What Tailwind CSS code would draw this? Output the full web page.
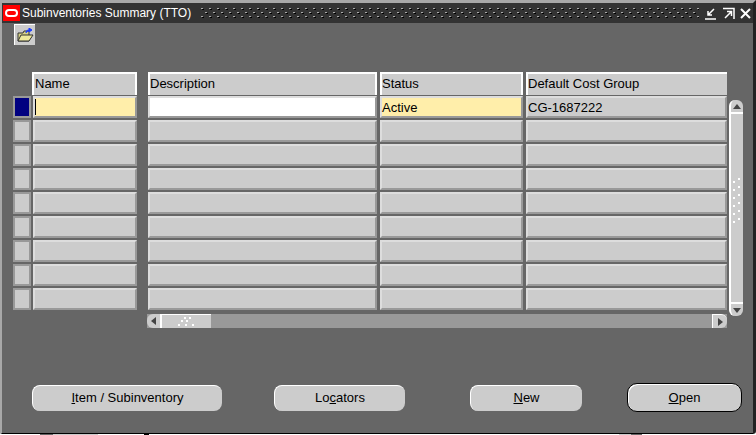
<!DOCTYPE html>
<html>
<head>
  <meta charset="UTF-8">
  <title>Subinventories Summary (TTO)</title>
  <script src="https://cdn.jsdelivr.net/npm/@tailwindcss/browser@4"></script>
</head>
<body class="bg-white">
  <div class="w-[756px] h-[434px] overflow-hidden flex flex-col bg-[#666666] text-black text-[13px] leading-[14px] font-['Liberation_Sans',sans-serif] border-t-[3px] border-l-[2px] border-r-[3px] border-b-[1px] border-t-[#a8a8a8] border-l-[#a8a8a8] border-r-[#222222] border-b-black rounded-br-[3px]">

    <!-- title bar -->
    <div class="h-[20px] bg-[#333333] flex items-center text-white text-[12px] shrink-0">
      <div class="w-[17px] h-[16px] ml-[1px] bg-[#ff0000] flex items-center justify-center shrink-0">
        <div class="w-[13px] h-[8px] rounded-full border-2 border-white"></div>
      </div>
      <span class="ml-[2px] whitespace-nowrap">Subinventories Summary (TTO)</span>
      <svg class="ml-[10px]" width="498" height="10">
        <defs>
          <pattern id="grip" width="8" height="8" patternUnits="userSpaceOnUse">
            <rect x="0" y="0" width="2" height="1" fill="#aaaaaa"/>
            <rect x="1" y="1" width="2" height="1" fill="#000000"/>
            <rect x="4" y="4" width="2" height="1" fill="#aaaaaa"/>
            <rect x="5" y="5" width="2" height="1" fill="#000000"/>
          </pattern>
        </defs>
        <rect width="498" height="10" fill="url(#grip)"/>
      </svg>
      <div class="ml-auto flex items-center gap-[5px] pr-[2px]">
        <svg width="13" height="13" viewBox="0 0 13 13" fill="none" stroke="white" stroke-width="1.5"><path d="M10 2 L4 8 M4 4 V8 H8 M1 12 H12"/></svg>
        <svg width="13" height="13" viewBox="0 0 13 13" fill="none" stroke="white" stroke-width="1.5"><path d="M1 1.5 H12 V12 M3 11 L9 5 M5 4.5 H9.5 V9"/></svg>
        <svg width="11" height="11" viewBox="0 0 11 11" fill="none" stroke="white" stroke-width="2"><path d="M1 1 L10 10 M10 1 L1 10"/></svg>
      </div>
    </div>

    <!-- toolbar -->
    <div class="h-[49px] shrink-0 pl-[12px] pt-[1px]">
      <div class="w-[21px] h-[21px] bg-[#cccccc] border-t border-l border-t-white border-l-white flex items-center justify-center">
        <svg width="17" height="15" viewBox="0 0 17 15">
          <path d="M1 5 H6 L7 3 H12 V13 H1 Z" fill="#d8d488" stroke="#333" stroke-width="1"/>
          <path d="M1 13 L4 7 H16 L12 13 Z" fill="#eeea9c" stroke="#333" stroke-width="1"/>
          <path d="M9 5 C9 2 11 2 13 2 M12 0 L15 2 L12 4 Z" fill="#1a3cff" stroke="#1a3cff" stroke-width="1"/>
        </svg>
      </div>
    </div>

    <!-- block -->
    <div class="flex shrink-0">
      <div class="w-[725px] shrink-0">
        <!-- header -->
        <div class="flex h-[23px] mb-[1px] ml-[30px]">
          <div class="w-[105px] mr-[11px] bg-[#cccccc] border-t-2 border-l-2 border-r-2 border-white pl-[1px] pt-[3px]">Name</div>
          <div class="w-[229px] mr-[3px] bg-[#cccccc] border-t-2 border-l-2 border-r-2 border-white pt-[3px]">Description</div>
          <div class="w-[143px] mr-[3px] bg-[#cccccc] border-t-2 border-l-2 border-r-2 border-white pt-[3px]">Status</div>
          <div class="w-[201px] bg-[#cccccc] border-t-2 border-l-2 border-white pt-[3px]">Default Cost Group</div>
        </div>
        <div id="rows"></div>
        <!-- horizontal scrollbar -->
        <div class="flex h-[14px] mt-[2px] ml-[145px] w-[580px] bg-[#999999]">
          <div class="w-[15px] bg-[#cccccc] rounded-l-[6px] border-r-2 border-white flex items-center justify-center">
            <div class="w-0 h-0 border-y-[4px] border-y-transparent border-r-[5px] border-r-[#444444]"></div>
          </div>
          <div class="w-[49px] bg-[#cccccc] border-t border-white flex items-center justify-center">
            <svg width="20" height="9" fill="white"><rect x="7" y="0" width="2" height="2"/><rect x="12" y="0" width="2" height="2"/><rect x="4" y="3" width="2" height="2"/><rect x="9" y="3" width="2" height="2"/><rect x="1" y="7" width="2" height="2"/><rect x="8" y="7" width="2" height="2"/><rect x="15" y="7" width="2" height="2"/></svg>
          </div>
          <div class="ml-auto w-[15px] bg-[#cccccc] rounded-r-[6px] border-l border-t border-white flex items-center justify-center">
            <div class="w-0 h-0 border-y-[4px] border-y-transparent border-l-[5px] border-l-[#444444]"></div>
          </div>
        </div>
      </div>
      <!-- vertical scrollbar -->
      <div class="w-[14px] h-[216px] mt-[28px] ml-[2px] flex flex-col bg-[#cccccc] rounded-[6px] border-l-2 border-white">
        <div class="h-[14px] rounded-t-[6px] border-b-2 border-white flex items-center justify-center">
          <div class="w-0 h-0 border-x-[4px] border-x-transparent border-b-[5px] border-b-[#444444]"></div>
        </div>
        <div class="flex-1 pt-[64px] pl-[2px]">
          <svg width="9" height="48" fill="white"><rect x="5" y="0" width="2" height="2"/><rect x="0" y="3" width="2" height="2"/><rect x="5" y="8" width="2" height="2"/><rect x="0" y="11" width="2" height="2"/><rect x="5" y="16" width="2" height="2"/><rect x="0" y="19" width="2" height="2"/><rect x="5" y="24" width="2" height="2"/><rect x="0" y="27" width="2" height="2"/><rect x="5" y="32" width="2" height="2"/><rect x="0" y="35" width="2" height="2"/><rect x="5" y="40" width="2" height="2"/><rect x="0" y="43" width="2" height="2"/></svg>
        </div>
        <div class="h-[14px] rounded-b-[6px] border-t-2 border-white flex items-center justify-center">
          <div class="w-0 h-0 border-x-[4px] border-x-transparent border-t-[5px] border-t-[#444444]"></div>
        </div>
      </div>
    </div>

    <!-- buttons -->
    <div class="flex items-center mt-[55px] pl-[30px]">
      <button class="w-[190px] h-[26px] bg-[#cccccc] rounded-[8px] border-t border-l border-white"><u>I</u>tem / Subinventory</button>
      <button class="w-[131px] h-[26px] ml-[52px] bg-[#cccccc] rounded-[8px] border-t border-l border-white">Lo<u>c</u>ators</button>
      <button class="w-[112px] h-[26px] ml-[65px] bg-[#cccccc] rounded-[8px] border-t border-l border-white"><u>N</u>ew</button>
      <button class="w-[115px] h-[29px] ml-[45px] bg-[#cccccc] rounded-[10px] border border-black shadow-[inset_1px_1px_0_#ffffff]"><u>O</u>pen</button>
    </div>
  </div>

  <!-- what shows below the window -->
  <div class="flex h-[1px] w-[756px]">
    <div class="w-[40px] bg-white"></div>
    <div class="w-[13px] bg-[#666666]"></div>
    <div class="w-[45px] bg-[#cccccc]"></div>
    <div class="w-[46px] bg-white"></div>
    <div class="w-[5px] bg-black"></div>
    <div class="w-[470px] bg-white"></div>
    <div class="w-[12px] bg-[#cccccc]"></div>
    <div class="w-[11px] bg-[#666666]"></div>
    <div class="flex-1 bg-white"></div>
  </div>

  <script>
    var html = '';
    for (var i = 0; i < 9; i++) {
      var first = i === 0;
      var cell = 'h-[22px] mb-[2px] border-2 border-t-[#dddddd] border-l-[#dddddd] border-r-[#999999] border-b-[#999999] pt-[3px] ';
      html += '<div class="flex ml-[11px]">' +
        '<div class="w-[18px] mr-[2px] h-[22px] border-2 border-[#999999] ' + (first ? 'bg-[#000080]' : 'bg-[#cccccc]') + '"></div>' +
        '<div class="w-[104px] mr-[11px] ' + cell + (first ? 'bg-[#ffeeaa]' : 'bg-[#cccccc]') + '">' + (first ? '<span class="block w-[1px] h-[16px] bg-black -mt-[2px]"></span>' : '') + '</div>' +
        '<div class="w-[229px] mr-[3px] ' + cell + (first ? 'bg-white' : 'bg-[#cccccc]') + '"></div>' +
        '<div class="w-[143px] mr-[3px] ' + cell + (first ? 'bg-[#ffeeaa]' : 'bg-[#cccccc]') + '">' + (first ? 'Active' : '') + '</div>' +
        '<div class="w-[201px] ' + cell + 'bg-[#cccccc]">' + (first ? 'CG-1687222' : '') + '</div>' +
        '</div>';
    }
    document.getElementById('rows').innerHTML = html;
  </script>
</body>
</html>
